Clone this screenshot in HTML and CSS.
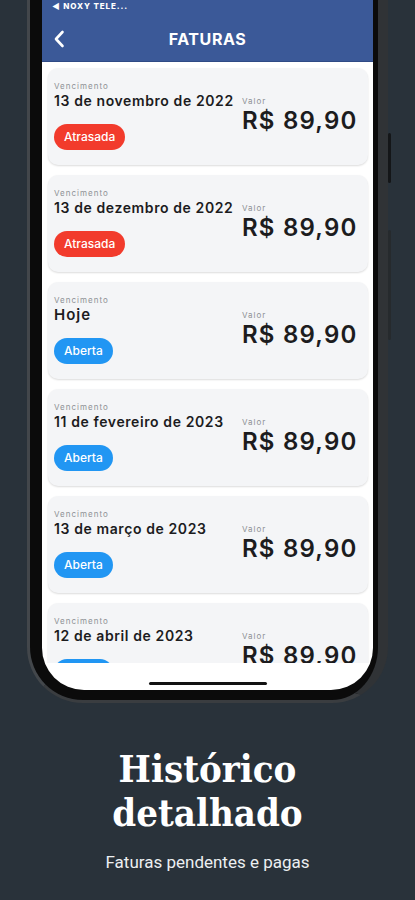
FILE: index.html
```html
<!DOCTYPE html>
<html>
<head>
    <meta charset="utf-8">
    <title>Faturas</title>
    <link rel="stylesheet" href="styles.css">
</head>
<body>

    <div class="phone">
        <span class="side-btn"></span>
        <span class="side-btn side-btn-low"></span>

        <div class="screen">
            <div class="app-header">
                <div class="status">&#9664; NOXY TELE...</div>
                <div class="title-row">
                    <svg class="back" width="12" height="18" viewBox="0 0 12 18">
                        <path d="M9.5 2 L3 9 L9.5 16" fill="none" stroke="#fff" stroke-width="2.6" stroke-linecap="round" stroke-linejoin="round"/>
                    </svg>
                    <h1>FATURAS</h1>
                </div>
            </div>

            <div class="list">
                <div class="card">
                    <div class="left">
                        <div class="label">Vencimento</div>
                        <div class="date">13 de novembro de 2022</div>
                        <span class="badge late">Atrasada</span>
                    </div>
                    <div class="right">
                        <div class="label">Valor</div>
                        <div class="price">R$ 89,90</div>
                    </div>
                </div>

                <div class="card">
                    <div class="left">
                        <div class="label">Vencimento</div>
                        <div class="date">13 de dezembro de 2022</div>
                        <span class="badge late">Atrasada</span>
                    </div>
                    <div class="right">
                        <div class="label">Valor</div>
                        <div class="price">R$ 89,90</div>
                    </div>
                </div>

                <div class="card">
                    <div class="left">
                        <div class="label">Vencimento</div>
                        <div class="date date-big">Hoje</div>
                        <span class="badge open">Aberta</span>
                    </div>
                    <div class="right">
                        <div class="label">Valor</div>
                        <div class="price">R$ 89,90</div>
                    </div>
                </div>

                <div class="card">
                    <div class="left">
                        <div class="label">Vencimento</div>
                        <div class="date">11 de fevereiro de 2023</div>
                        <span class="badge open">Aberta</span>
                    </div>
                    <div class="right">
                        <div class="label">Valor</div>
                        <div class="price">R$ 89,90</div>
                    </div>
                </div>

                <div class="card">
                    <div class="left">
                        <div class="label">Vencimento</div>
                        <div class="date">13 de março de 2023</div>
                        <span class="badge open">Aberta</span>
                    </div>
                    <div class="right">
                        <div class="label">Valor</div>
                        <div class="price">R$ 89,90</div>
                    </div>
                </div>

                <div class="card">
                    <div class="left">
                        <div class="label">Vencimento</div>
                        <div class="date">12 de abril de 2023</div>
                        <span class="badge open">Aberta</span>
                    </div>
                    <div class="right">
                        <div class="label">Valor</div>
                        <div class="price">R$ 89,90</div>
                    </div>
                </div>
            </div>

            <div class="home-bar">
                <span class="indicator"></span>
            </div>
        </div>
    </div>

    <div class="caption">
        <h2>Histórico<br>detalhado</h2>
        <p>Faturas pendentes e pagas</p>
    </div>

</body>
</html>
```

FILE: styles.css
```css
body {
    background-color: #29323a;
    margin: 0;
    font-family: Inter, Roboto, "Liberation Sans", sans-serif;
}

/* phone frame */

.phone {
    position: relative;
    box-sizing: border-box;
    width: 361px;
    margin-left: 27px;
    padding: 0 5px 10px 12px;
    background-color: #0b0b0b;
    border-left: 3px solid #43474b;
    border-right: 10px solid #303336;
    border-bottom: 3px solid #3a3d40;
    border-radius: 0 0 56px 56px;
}

.side-btn {
    position: absolute;
    right: -13px;
    top: 133px;
    width: 3px;
    height: 50px;
    background-color: #141618;
    border-radius: 2px;
}

.side-btn-low {
    top: 230px;
    height: 110px;
    background-color: #262a2d;
}

.screen {
    background-color: white;
    border-radius: 0 0 42px 42px;
    overflow: hidden;
}

/* header */

.app-header {
    height: 62px;
    box-sizing: border-box;
    background-color: #3b5998;
    border-bottom: 1px solid #2f4a85;
    color: white;
}

.status {
    padding: 1px 0 0 10px;
    font-size: 8px;
    line-height: 10px;
    font-weight: 800;
    letter-spacing: 0.9px;
}

.title-row {
    position: relative;
    height: 34px;
    margin-top: 11px;
    display: flex;
    align-items: center;
    justify-content: center;
}

.back {
    position: absolute;
    left: 11px;
    top: 8px;
}

.title-row h1 {
    margin: 0;
    font-size: 16px;
    font-weight: 700;
    letter-spacing: 0.6px;
}

/* cards */

.list {
    height: 601px;
    overflow: hidden;
    padding: 6px 5px 0 6px;
    box-sizing: border-box;
    display: flex;
    flex-direction: column;
    gap: 10px;
}

.card {
    flex-shrink: 0;
    height: 97px;
    box-sizing: border-box;
    background-color: #f4f5f7;
    border-radius: 10px;
    box-shadow: 0 1px 2px rgba(0, 0, 0, 0.14);
    display: flex;
    justify-content: space-between;
    padding: 13px 10px 0 6px;
}

.label {
    font-size: 8px;
    line-height: 10px;
    color: #8e9195;
    letter-spacing: 1px;
}

.date {
    font-size: 14px;
    line-height: 19px;
    font-weight: 600;
    color: #1c1c1e;
    letter-spacing: 0.6px;
}

.date-big {
    font-size: 15px;
    letter-spacing: 1px;
}

.badge {
    display: inline-block;
    margin-top: 14px;
    height: 26px;
    line-height: 26px;
    padding: 0 10px;
    border-radius: 13px;
    font-size: 12px;
    font-weight: 500;
    color: white;
}

.late {
    background-color: #f23b2c;
}

.open {
    background-color: #2196f3;
}

.right {
    padding-top: 15px;
    width: 116px;
}

.price {
    font-size: 24px;
    line-height: 30px;
    font-weight: 600;
    color: #1c1c1e;
    letter-spacing: 1.2px;
    white-space: nowrap;
}

.home-bar {
    height: 27px;
    display: flex;
    justify-content: center;
    align-items: flex-start;
    padding-top: 19px;
    box-sizing: border-box;
}

.indicator {
    width: 118px;
    height: 3px;
    border-radius: 2px;
    background-color: #111;
}

/* caption */

.caption {
    text-align: center;
    color: white;
    padding-top: 44px;
}

.caption h2 {
    margin: 0;
    font-family: "DejaVu Serif", "Liberation Serif", serif;
    font-stretch: condensed;
    font-size: 38px;
    line-height: 44px;
    font-weight: 700;
}

.caption p {
    margin: 17px 0 0;
    font-family: Roboto, "Liberation Sans", sans-serif;
    font-size: 17px;
    color: #eceff1;
}
```
